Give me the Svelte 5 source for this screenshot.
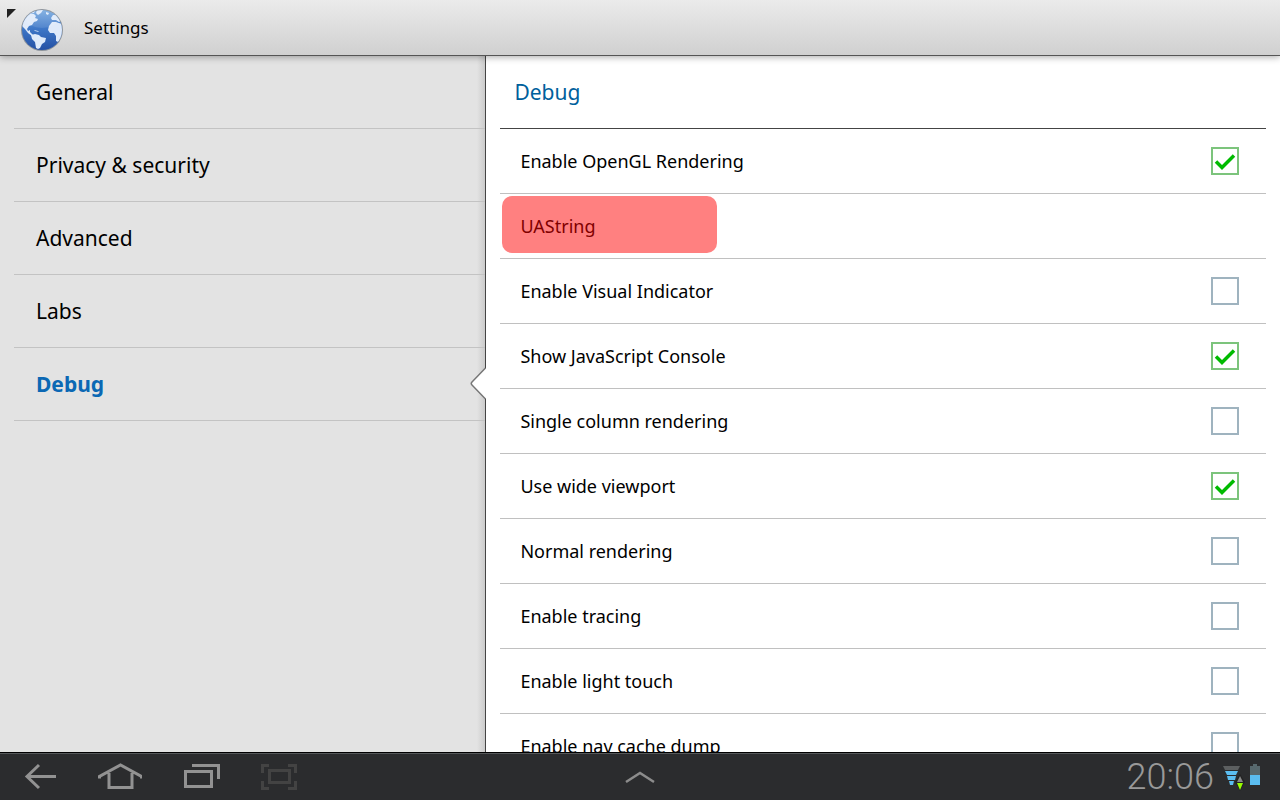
<script>
  let current = "Debug";
  const sections = ["General", "Privacy & security", "Advanced", "Labs", "Debug"];

  let options = [
    { id: "opengl", label: "Enable OpenGL Rendering", on: true },
    { id: "uastring", label: "UAString", link: true },
    { id: "indicator", label: "Enable Visual Indicator", on: false },
    { id: "console", label: "Show JavaScript Console", on: true },
    { id: "singlecol", label: "Single column rendering", on: false },
    { id: "viewport", label: "Use wide viewport", on: true },
    { id: "normal", label: "Normal rendering", on: false },
    { id: "tracing", label: "Enable tracing", on: false },
    { id: "touch", label: "Enable light touch", on: false },
    { id: "navdump", label: "Enable nav cache dump", on: false },
  ];
</script>

<div class="screen">
  <header>
    <button class="up" aria-label="Navigate up">
      <svg width="64" height="56" viewBox="0 0 64 56">
        <defs>
          <linearGradient id="sea" x1="0" y1="0" x2="0" y2="1">
            <stop offset="0" stop-color="#78aae0" />
            <stop offset="0.45" stop-color="#3f78c8" />
            <stop offset="1" stop-color="#2450a4" />
          </linearGradient>
          <clipPath id="globe"><circle cx="42" cy="30" r="20" /></clipPath>
        </defs>
        <path d="M7 9h9l-9 9z" fill="#222" />
        <circle cx="42" cy="30" r="21" fill="#8d949c" />
        <circle cx="42" cy="30" r="20" fill="url(#sea)" />
        <g clip-path="url(#globe)" fill="#dfeafa">
          <path d="M22 22l4-6 3-2 5 0 2 2-1 2 3 1-1 2-3 1-2 3-3 1-2 3 1 2 2-1 0 2 2 2 2 2-2 0-4-3-3-4-3-3z" />
          <path d="M31 35l4-1 4 1 2 2 5 1-1 4-3 2-2 4-2 1-2-1-1-6-3-3z" />
          <path d="M49 26l3-4 4 0 3 1 3 1v14l-4 4-2-1 0-5-2-3-4 0-2-3z" />
          <path d="M52 20l-1-2 2-3 3 0 5 6-2 1-3-2zM37 10l6 0-2 3-3 2-2-2zM29 14l3-3 3 0-1 2zM46 12l3 1-1 2-2-1zM34 30l4 1 1 1-4-1z" />
        </g>
        <ellipse cx="42" cy="19" rx="16" ry="9" fill="#fff" opacity="0.1" />
      </svg>
    </button>
    <h1>Settings</h1>
  </header>

  <main>
    <nav>
      <ul>
        {#each sections as name}
          <li>
            <button class="section" class:active={name === current} on:click={() => (current = name)}>
              {name}
            </button>
            {#if name === current}
              <svg class="pointer" width="16" height="34" viewBox="0 0 16 34">
                <path d="M16 1L2 15q-1.500 1.500 0 3L16 32z" fill="#fff" />
                <path d="M15.500 1L2 15q-1.500 1.500 0 3L15.500 32" fill="none" stroke="#777" stroke-width="1.500" />
              </svg>
            {/if}
          </li>
        {/each}
      </ul>
    </nav>

    <section class="panel">
      <h2>{current}</h2>
      {#each options as opt}
        <div class="row">
          {#if opt.link}
            <button class="entry">{opt.label}</button>
          {:else}
            <label for={opt.id}>{opt.label}</label>
            <span class="tick">
              <input type="checkbox" id={opt.id} bind:checked={opt.on} />
              {#if opt.on}
                <svg width="28" height="28" viewBox="0 0 28 28">
                  <path d="M5 14.500l6 6L23 8.500" fill="none" stroke="#0b0" stroke-width="3.500" />
                </svg>
              {/if}
            </span>
          {/if}
        </div>
      {/each}
    </section>
  </main>

  <footer>
    <div class="keys">
      <button aria-label="Back">
        <svg width="44" height="32" viewBox="0 0 44 32" fill="none" stroke="#929292" stroke-width="3">
          <path d="M21 4L9 15.500 21 27M9 15.500h29" />
        </svg>
      </button>
      <button aria-label="Home">
        <svg width="44" height="32" viewBox="0 0 44 32" fill="none" stroke="#929292" stroke-width="3">
          <path d="M1.500 17.500v-2L22.500 4l21 11.500v2M11 12v14.500h23V12" />
        </svg>
      </button>
      <button aria-label="Recent apps">
        <svg width="44" height="32" viewBox="0 0 44 32" fill="none" stroke="#929292" stroke-width="3">
          <path d="M7.500 10.500h26v15h-26zM14 4.500h26.500V18" />
        </svg>
      </button>
      <button aria-label="Screenshot">
        <svg width="44" height="32" viewBox="0 0 44 32" fill="none" stroke="#434343" stroke-width="3">
          <path d="M11.500 9.500h20v12h-20zM4.500 12V4.500H11M30 4.500h7.500V12M4.500 20v7.500H11M30 27.500h7.500V20" />
        </svg>
      </button>
    </div>
    <button class="tray" aria-label="Open tray">
      <svg width="32" height="16" viewBox="0 0 32 16">
        <path d="M2 13L16 4l14 9" fill="none" stroke="#8c8c8c" stroke-width="2.500" />
      </svg>
    </button>
    <div class="status">
      <time>20:06</time>
      <svg width="38" height="28" viewBox="0 0 38 28">
        <path d="M1 3h17l-2 4H3z" fill="#5c5f60" />
        <path d="M3 8h13l-2 4H5zM5 13h9l-1 4H6zM7 18h5l-1 4H8z" fill="#5bbdf0" />
        <path d="M18 11l5 8-5 9-5-9z" fill="#222" />
        <path d="M18 13l3 6h-6z" fill="#888" />
        <path d="M15 20h6l-3 7z" fill="#9f0" />
        <path d="M31 1h4v2h3v9H28V3h3z" fill="#57686d" />
        <path d="M28 12h10v10H28z" fill="#5bbdf0" />
      </svg>
    </div>
  </footer>
</div>

<style>
  :global(body) {
    margin: 0;
  }
  .screen {
    display: flex;
    flex-direction: column;
    height: 100vh;
    font-family: "Noto Sans", "Open Sans", sans-serif;
    color: #000;
  }
  button {
    margin: 0;
    padding: 0;
    border: none;
    background: none;
    font: inherit;
    color: inherit;
    text-align: left;
    cursor: pointer;
  }
  svg {
    display: block;
  }

  header {
    display: flex;
    align-items: center;
    gap: 20px;
    flex: none;
    height: 56px;
    box-sizing: border-box;
    border-bottom: 1px solid #555;
    background: linear-gradient(#ebebeb, #d0d0d0);
    box-shadow: 0 1px 7px rgba(0, 0, 0, 0.35);
    position: relative;
    z-index: 1;
  }
  h1 {
    margin: 0;
    font-size: 17px;
    font-weight: 400;
  }

  main {
    display: grid;
    grid-template-columns: 38% 1fr;
    flex: 1;
    min-height: 0;
    overflow: hidden;
  }
  nav {
    border-right: 1px solid #444;
    background: linear-gradient(to left, #cbcbcb, #e3e3e3 8px);
  }
  ul {
    margin: 0;
    padding: 0 0 0 14px;
    list-style: none;
  }
  li {
    position: relative;
    border-bottom: 1px solid #c3c3c3;
  }
  .section {
    display: block;
    width: 100%;
    height: 72px;
    padding-left: 22px;
    font-size: 21px;
  }
  .active {
    color: #0b68b4;
    font-weight: 700;
  }
  /* notch that ties the chosen section to the panel */
  .pointer {
    position: absolute;
    right: -1px;
    top: 50%;
    transform: translateY(-50%);
  }

  .panel {
    padding: 0 14px;
    background: #fff;
    overflow: hidden;
  }
  h2 {
    margin: 0;
    padding-left: 14px;
    border-bottom: 1px solid #444;
    font-size: 21px;
    line-height: 72px;
    font-weight: 400;
    color: #00609c;
  }
  .row {
    display: flex;
    align-items: center;
    height: 64px;
    border-bottom: 1px solid #c0c0c0;
    font-size: 18px;
  }
  label {
    flex: 1;
    padding-left: 20px;
  }
  .entry {
    align-self: flex-start;
    width: 28%;
    height: 57px;
    margin: 2px 0 0 2px;
    padding: 3px 0 0 18px;
    border-radius: 10px;
    background: #ff8080;
    color: #800000;
  }
  .tick {
    display: grid;
    margin-right: 27px;
  }
  .tick > * {
    grid-area: 1 / 1;
    pointer-events: none;
  }
  input {
    appearance: none;
    width: 28px;
    height: 28px;
    margin: 0;
    box-sizing: border-box;
    border: 2px solid #9fb3bf;
    background: #fff;
  }
  .tick > input {
    pointer-events: auto;
  }
  input:checked {
    border-color: #7cc47c;
  }

  footer {
    display: grid;
    grid-template-columns: 1fr auto 1fr;
    flex: none;
    height: 48px;
    box-sizing: border-box;
    border-top: 1px solid #000;
    background: #2b2c2e;
    box-shadow: inset 0 1px #55585a;
    position: relative;
  }
  .keys {
    display: flex;
  }
  .keys button {
    display: grid;
    place-items: center;
    width: 80px;
  }
  .tray {
    display: grid;
    place-items: center;
  }
  .status {
    display: flex;
    align-items: center;
    justify-content: flex-end;
    gap: 8px;
    padding-right: 20px;
  }
  time {
    font-family: Roboto, "Liberation Sans", sans-serif;
    font-size: 36px;
    font-weight: 300;
    line-height: 40px;
    color: #999;
  }
</style>
